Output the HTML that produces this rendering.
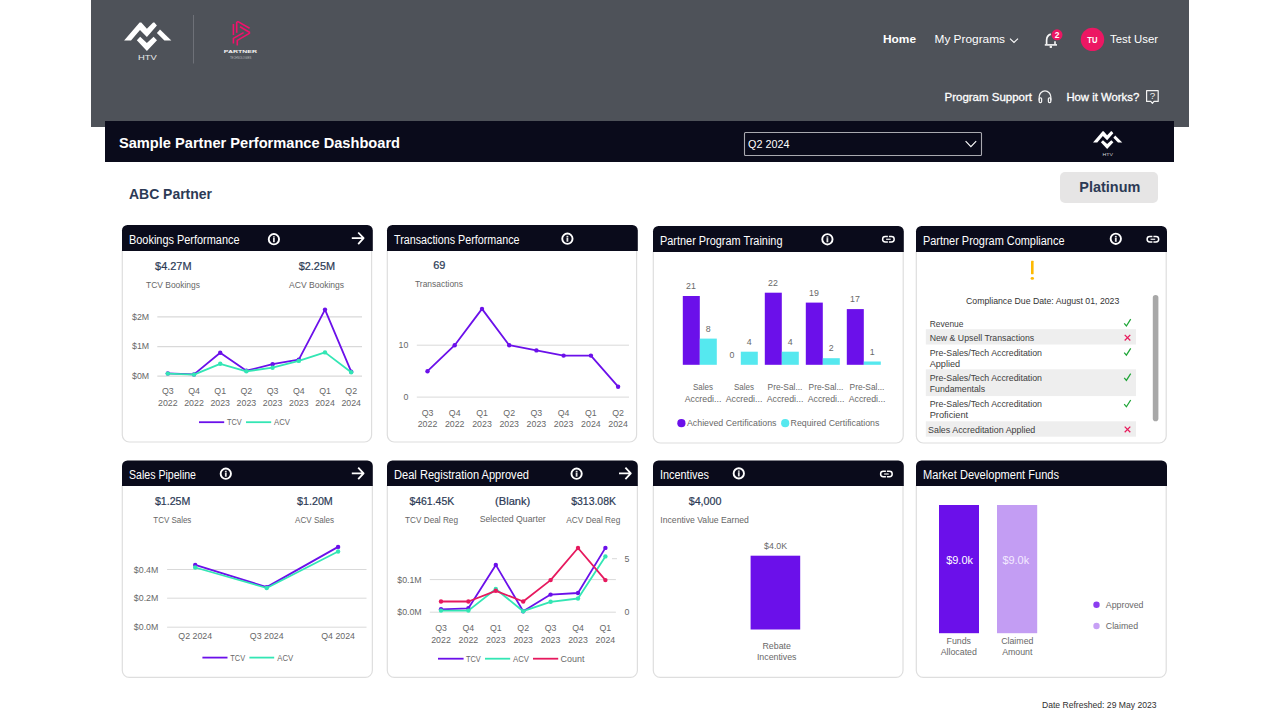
<!DOCTYPE html>
<html lang="en">
<head>
<meta charset="utf-8">
<title>Sample Partner Performance Dashboard</title>
<style>
html,body{margin:0;padding:0;background:#fff;}
body{width:1280px;height:720px;position:relative;overflow:hidden;font-family:"Liberation Sans",sans-serif;}
#topbar{position:absolute;left:91px;top:0;width:1098px;height:127px;background:#4e5259;}
#titlebar{position:absolute;left:105px;top:121px;width:1069px;height:41px;background:#0a0b1b;}
#tier{position:absolute;left:1060px;top:172px;width:98px;height:31px;border-radius:5px;background:#e6e5e5;}
#ink{position:absolute;left:0;top:0;width:1280px;height:720px;font-family:"Liberation Sans",sans-serif;}
</style>
</head>
<body>
<header id="topbar"></header>
<div id="titlebar"></div>
<div id="tier"></div>
<main>
<svg id="ink" width="1280" height="720" viewBox="0 0 1280 720" font-family="Liberation Sans, sans-serif">
<path d="M122.30,250.00 V435.00 A7,7 0 0 0 129.30,442.00 H364.60 A7,7 0 0 0 371.60,435.00 V250.00" fill="#fff" stroke="#dedede" stroke-width="1.2"/>
<path d="M122.00,251.00 V230.50 A5.5,5.5 0 0 1 127.50,225.00 H367.30 A5.5,5.5 0 0 1 372.80,230.50 V251.00 Z" fill="#0a0b1b"/>
<path d="M387.30,250.00 V435.00 A7,7 0 0 0 394.30,442.00 H629.60 A7,7 0 0 0 636.60,435.00 V250.00" fill="#fff" stroke="#dedede" stroke-width="1.2"/>
<path d="M387.00,251.00 V230.50 A5.5,5.5 0 0 1 392.50,225.00 H632.30 A5.5,5.5 0 0 1 637.80,230.50 V251.00 Z" fill="#0a0b1b"/>
<path d="M653.30,251.00 V436.00 A7,7 0 0 0 660.30,443.00 H896.20 A7,7 0 0 0 903.20,436.00 V251.00" fill="#fff" stroke="#dedede" stroke-width="1.2"/>
<path d="M653.00,252.00 V231.50 A5.5,5.5 0 0 1 658.50,226.00 H898.30 A5.5,5.5 0 0 1 903.80,231.50 V252.00 Z" fill="#0a0b1b"/>
<path d="M916.30,251.00 V436.00 A7,7 0 0 0 923.30,443.00 H1159.20 A7,7 0 0 0 1166.20,436.00 V251.00" fill="#fff" stroke="#dedede" stroke-width="1.2"/>
<path d="M916.00,252.00 V231.50 A5.5,5.5 0 0 1 921.50,226.00 H1161.50 A5.5,5.5 0 0 1 1167.00,231.50 V252.00 Z" fill="#0a0b1b"/>
<path d="M122.30,485.10 V670.40 A7,7 0 0 0 129.30,677.40 H365.35 A7,7 0 0 0 372.35,670.40 V485.10" fill="#fff" stroke="#dedede" stroke-width="1.2"/>
<path d="M122.00,486.10 V465.90 A5.5,5.5 0 0 1 127.50,460.40 H367.30 A5.5,5.5 0 0 1 372.80,465.90 V486.10 Z" fill="#0a0b1b"/>
<path d="M387.30,485.10 V670.40 A7,7 0 0 0 394.30,677.40 H630.40 A7,7 0 0 0 637.40,670.40 V485.10" fill="#fff" stroke="#dedede" stroke-width="1.2"/>
<path d="M387.00,486.10 V465.90 A5.5,5.5 0 0 1 392.50,460.40 H632.30 A5.5,5.5 0 0 1 637.80,465.90 V486.10 Z" fill="#0a0b1b"/>
<path d="M653.30,485.10 V670.40 A7,7 0 0 0 660.30,677.40 H896.00 A7,7 0 0 0 903.00,670.40 V485.10" fill="#fff" stroke="#dedede" stroke-width="1.2"/>
<path d="M653.00,486.10 V465.90 A5.5,5.5 0 0 1 658.50,460.40 H898.30 A5.5,5.5 0 0 1 903.80,465.90 V486.10 Z" fill="#0a0b1b"/>
<path d="M916.30,485.10 V670.40 A7,7 0 0 0 923.30,677.40 H1159.20 A7,7 0 0 0 1166.20,670.40 V485.10" fill="#fff" stroke="#dedede" stroke-width="1.2"/>
<path d="M916.00,486.10 V465.90 A5.5,5.5 0 0 1 921.50,460.40 H1161.50 A5.5,5.5 0 0 1 1167.00,465.90 V486.10 Z" fill="#0a0b1b"/>
<polygon points="124.10,40.60 139.60,22.50 141.30,22.50 146.90,28.80 153.10,22.50 154.40,22.50 156.90,25.60 146.90,36.90 140.00,30.00 131.00,40.60" fill="#fff"/>
<polygon points="160.00,29.40 171.30,40.60 164.40,40.60 156.90,33.10" fill="#fff"/>
<polygon points="136.80,40.30 140.20,36.80 146.90,43.10 153.60,36.80 157.00,40.30 146.90,51.00" fill="#fff"/>
<text x="147.3" y="60.2" font-size="8.1" text-anchor="middle" fill="#e9e9ea" textLength="18.8" lengthAdjust="spacingAndGlyphs">HTV</text>
<line x1="193.5" y1="15.0" x2="193.5" y2="63.5" stroke="#6e7178" stroke-width="1"/>
<g fill="none" stroke="#f3106c" stroke-width="1.6" stroke-linecap="butt" stroke-linejoin="miter"><path d="M233.4,24 V35.1"/><path d="M236.7,32.7 V22.4 L238,21.6 L249.6,28.3"/><path d="M240,26.8 L249.4,32.2 V33.4 L237.3,40.4 V45.6"/><path d="M243.6,32.6 L233.4,38.4 V43.6"/></g>
<text x="240.4" y="53.3" font-size="4.2" text-anchor="middle" font-weight="700" fill="#f4f4f4" textLength="33.3" lengthAdjust="spacingAndGlyphs">PARTNER</text>
<text x="240.7" y="58.9" font-size="2.6" text-anchor="middle" fill="#b9bbbf" textLength="21.5" lengthAdjust="spacingAndGlyphs">TECHNOLOGIES</text>
<text x="883.0" y="43.4" font-size="11.2" font-weight="700" fill="#fff" textLength="33.0" lengthAdjust="spacingAndGlyphs">Home</text>
<text x="934.5" y="43.4" font-size="11.2" fill="#fff" textLength="70.5" lengthAdjust="spacingAndGlyphs">My Programs</text>
<path d="M1010,38.6 L1014,42.4 L1018,38.6" fill="none" stroke="#fff" stroke-width="1.1"/>
<path d="M1050.8,34.1 C1047.6,35.1 1046.6,37.6 1046.6,40.2 V44.2" fill="none" stroke="#f6f6f6" stroke-width="1.7"/><path d="M1044.8,44.9 H1057" stroke="#f6f6f6" stroke-width="1.6" fill="none"/><path d="M1055,41.2 V44.4" stroke="#f6f6f6" stroke-width="1.6" fill="none"/><rect x="1049.6" y="45.8" width="2.4" height="2.1" rx="0.6" fill="#f0f0f0"/>
<circle cx="1057.0" cy="34.8" r="5.5" fill="#ec1763"/>
<text x="1057.0" y="37.8" font-size="8.4" text-anchor="middle" font-weight="700" fill="#fff">2</text>
<circle cx="1092.5" cy="39.4" r="11.7" fill="#ec1763"/>
<text x="1092.4" y="42.9" font-size="9.6" text-anchor="middle" font-weight="700" fill="#fff" textLength="10.2" lengthAdjust="spacingAndGlyphs">TU</text>
<text x="1110.0" y="43.1" font-size="11.4" fill="#fff" textLength="48.0" lengthAdjust="spacingAndGlyphs">Test User</text>
<text x="944.5" y="101.0" font-size="11.2" fill="#fff" textLength="87.5" lengthAdjust="spacingAndGlyphs" stroke="#fff" stroke-width="0.3">Program Support</text>
<g fill="none" stroke="#f2f2f2" stroke-width="1.25"><path d="M1039.2,100.4 V96.8 A5.8,5.8 0 0 1 1050.8,96.8 V100.4"/><rect x="1039.2" y="97.8" width="2.4" height="4.8" rx="1"/><rect x="1048.4" y="97.8" width="2.4" height="4.8" rx="1"/></g>
<text x="1066.4" y="101.0" font-size="11.2" fill="#fff" textLength="72.8" lengthAdjust="spacingAndGlyphs" stroke="#fff" stroke-width="0.3">How it Works?</text>
<path d="M1146.6,90.7 H1158.2 V101.4 H1154 L1152.4,103.3 L1150.8,101.4 H1146.6 Z" fill="none" stroke="#f2f2f2" stroke-width="1.2" stroke-linejoin="round"/>
<text x="1152.4" y="99.4" font-size="9.8" text-anchor="middle" fill="#f2f2f2">?</text>
<text x="119.0" y="148.4" font-size="14.4" font-weight="700" fill="#fff" textLength="281.0" lengthAdjust="spacingAndGlyphs">Sample Partner Performance Dashboard</text>
<rect x="744.5" y="132.5" width="237" height="23" fill="none" stroke="#a9a9b0" stroke-width="1.1" rx="1"/>
<text x="748.0" y="148.4" font-size="10.8" fill="#fff" textLength="41.5" lengthAdjust="spacingAndGlyphs">Q2 2024</text>
<path d="M965.6,141.2 L970.9,146.6 L976.2,141.2" fill="none" stroke="#fff" stroke-width="1.1"/>
<polygon points="1093.00,142.52 1102.61,131.30 1103.66,131.30 1107.14,135.21 1110.98,131.30 1111.79,131.30 1113.34,133.22 1107.14,140.23 1102.86,135.95 1097.28,142.52" fill="#fff"/>
<polygon points="1115.26,135.58 1122.26,142.52 1117.99,142.52 1113.34,137.87" fill="#fff"/>
<polygon points="1100.87,142.34 1102.98,140.17 1107.14,144.07 1111.29,140.17 1113.40,142.34 1107.14,148.97" fill="#fff"/>
<text x="1107.8" y="155.8" font-size="4.4" text-anchor="middle" fill="#d8d8dc" textLength="10.5" lengthAdjust="spacingAndGlyphs">HTV</text>
<text x="129.0" y="198.9" font-size="14" font-weight="700" fill="#2c3a55" textLength="83.0" lengthAdjust="spacingAndGlyphs">ABC Partner</text>
<text x="1109.8" y="192.1" font-size="15" text-anchor="middle" font-weight="700" fill="#2c3a55" textLength="61.0" lengthAdjust="spacingAndGlyphs">Platinum</text>
<text x="129.0" y="243.8" font-size="12" fill="#fff" textLength="110.5" lengthAdjust="spacingAndGlyphs">Bookings Performance</text>
<circle cx="273.9" cy="239.2" r="5.15" fill="none" stroke="#fff" stroke-width="1.9"/>
<rect x="273.0" y="236.3" width="1.8" height="1.3" fill="#e4e4e4"/><rect x="273.0" y="238.0" width="1.8" height="4.2" fill="#e4e4e4"/>
<path d="M351.8,238.2 H363.2 M358.2,232.5 L363.6,238.2 L358.2,244.1" fill="none" stroke="#fff" stroke-width="1.8" stroke-linecap="butt" stroke-linejoin="round"/>
<text x="394.0" y="243.8" font-size="12" fill="#fff" textLength="125.5" lengthAdjust="spacingAndGlyphs">Transactions Performance</text>
<circle cx="567.4" cy="238.7" r="5.15" fill="none" stroke="#fff" stroke-width="1.9"/>
<rect x="566.5" y="235.8" width="1.8" height="1.3" fill="#e4e4e4"/><rect x="566.5" y="237.5" width="1.8" height="4.2" fill="#e4e4e4"/>
<text x="660.0" y="244.8" font-size="12" fill="#fff" textLength="122.5" lengthAdjust="spacingAndGlyphs">Partner Program Training</text>
<circle cx="827.4" cy="239.3" r="5.15" fill="none" stroke="#fff" stroke-width="1.9"/>
<rect x="826.5" y="236.4" width="1.8" height="1.3" fill="#e4e4e4"/><rect x="826.5" y="238.1" width="1.8" height="4.2" fill="#e4e4e4"/>
<path d="M887.90,236.60 H885.30 A2.7,2.7 0 0 0 885.30,242.00 H887.90 M888.90,236.60 H891.50 A2.7,2.7 0 0 1 891.50,242.00 H888.90" fill="none" stroke="#fff" stroke-width="1.5"/>
<rect x="886.10" y="238.60" width="4.6" height="1.4" fill="#d2d2d5"/>
<text x="923.0" y="244.8" font-size="12" fill="#fff" textLength="141.5" lengthAdjust="spacingAndGlyphs">Partner Program Compliance</text>
<circle cx="1115.8" cy="238.8" r="5.15" fill="none" stroke="#fff" stroke-width="1.9"/>
<rect x="1114.9" y="235.9" width="1.8" height="1.3" fill="#e4e4e4"/><rect x="1114.9" y="237.6" width="1.8" height="4.2" fill="#e4e4e4"/>
<path d="M1152.40,236.60 H1149.80 A2.7,2.7 0 0 0 1149.80,242.00 H1152.40 M1153.40,236.60 H1156.00 A2.7,2.7 0 0 1 1156.00,242.00 H1153.40" fill="none" stroke="#fff" stroke-width="1.5"/>
<rect x="1150.60" y="238.60" width="4.6" height="1.4" fill="#d2d2d5"/>
<text x="129.0" y="478.8" font-size="12" fill="#fff" textLength="67.0" lengthAdjust="spacingAndGlyphs">Sales Pipeline</text>
<circle cx="225.8" cy="473.7" r="5.15" fill="none" stroke="#fff" stroke-width="1.9"/>
<rect x="224.9" y="470.8" width="1.8" height="1.3" fill="#e4e4e4"/><rect x="224.9" y="472.5" width="1.8" height="4.2" fill="#e4e4e4"/>
<path d="M351.8,473.3 H363.2 M358.2,467.6 L363.6,473.3 L358.2,479.2" fill="none" stroke="#fff" stroke-width="1.8" stroke-linecap="butt" stroke-linejoin="round"/>
<text x="394.0" y="478.8" font-size="12" fill="#fff" textLength="135.0" lengthAdjust="spacingAndGlyphs">Deal Registration Approved</text>
<circle cx="576.6" cy="473.7" r="5.15" fill="none" stroke="#fff" stroke-width="1.9"/>
<rect x="575.7" y="470.8" width="1.8" height="1.3" fill="#e4e4e4"/><rect x="575.7" y="472.5" width="1.8" height="4.2" fill="#e4e4e4"/>
<path d="M619.0,473.3 H630.4 M625.4,467.6 L630.8,473.3 L625.4,479.2" fill="none" stroke="#fff" stroke-width="1.8" stroke-linecap="butt" stroke-linejoin="round"/>
<text x="660.0" y="478.8" font-size="12" fill="#fff" textLength="49.0" lengthAdjust="spacingAndGlyphs">Incentives</text>
<circle cx="738.8" cy="473.4" r="5.15" fill="none" stroke="#fff" stroke-width="1.9"/>
<rect x="737.9" y="470.5" width="1.8" height="1.3" fill="#e4e4e4"/><rect x="737.9" y="472.2" width="1.8" height="4.2" fill="#e4e4e4"/>
<path d="M885.90,471.30 H883.30 A2.7,2.7 0 0 0 883.30,476.70 H885.90 M886.90,471.30 H889.50 A2.7,2.7 0 0 1 889.50,476.70 H886.90" fill="none" stroke="#fff" stroke-width="1.5"/>
<rect x="884.10" y="473.30" width="4.6" height="1.4" fill="#d2d2d5"/>
<text x="923.0" y="478.8" font-size="12" fill="#fff" textLength="136.0" lengthAdjust="spacingAndGlyphs">Market Development Funds</text>
<text x="173.3" y="269.9" font-size="11.8" text-anchor="middle" fill="#2c3a55" textLength="36.4" lengthAdjust="spacingAndGlyphs" stroke="#2c3a55" stroke-width="0.22">$4.27M</text>
<text x="173.0" y="287.7" font-size="8.8" text-anchor="middle" fill="#666" textLength="54.0" lengthAdjust="spacingAndGlyphs">TCV Bookings</text>
<text x="316.9" y="269.9" font-size="11.8" text-anchor="middle" fill="#2c3a55" textLength="36.4" lengthAdjust="spacingAndGlyphs" stroke="#2c3a55" stroke-width="0.22">$2.25M</text>
<text x="316.6" y="287.7" font-size="8.8" text-anchor="middle" fill="#666" textLength="55.0" lengthAdjust="spacingAndGlyphs">ACV Bookings</text>
<line x1="157.3" y1="316.9" x2="362.0" y2="316.9" stroke="#d9d9d9" stroke-width="1.25"/>
<text x="149.2" y="319.6" font-size="8.8" text-anchor="end" fill="#686868">$2M</text>
<line x1="157.3" y1="346.5" x2="362.0" y2="346.5" stroke="#d9d9d9" stroke-width="1.25"/>
<text x="149.2" y="349.2" font-size="8.8" text-anchor="end" fill="#686868">$1M</text>
<line x1="157.3" y1="376.2" x2="362.0" y2="376.2" stroke="#d9d9d9" stroke-width="1.25"/>
<text x="149.2" y="378.9" font-size="8.8" text-anchor="end" fill="#686868">$0M</text>
<text x="167.8" y="394.4" font-size="8.8" text-anchor="middle" fill="#686868">Q3</text>
<text x="167.8" y="406.1" font-size="8.8" text-anchor="middle" fill="#686868">2022</text>
<text x="194.0" y="394.4" font-size="8.8" text-anchor="middle" fill="#686868">Q4</text>
<text x="194.0" y="406.1" font-size="8.8" text-anchor="middle" fill="#686868">2022</text>
<text x="220.2" y="394.4" font-size="8.8" text-anchor="middle" fill="#686868">Q1</text>
<text x="220.2" y="406.1" font-size="8.8" text-anchor="middle" fill="#686868">2023</text>
<text x="246.4" y="394.4" font-size="8.8" text-anchor="middle" fill="#686868">Q2</text>
<text x="246.4" y="406.1" font-size="8.8" text-anchor="middle" fill="#686868">2023</text>
<text x="272.6" y="394.4" font-size="8.8" text-anchor="middle" fill="#686868">Q3</text>
<text x="272.6" y="406.1" font-size="8.8" text-anchor="middle" fill="#686868">2023</text>
<text x="298.8" y="394.4" font-size="8.8" text-anchor="middle" fill="#686868">Q4</text>
<text x="298.8" y="406.1" font-size="8.8" text-anchor="middle" fill="#686868">2023</text>
<text x="325.0" y="394.4" font-size="8.8" text-anchor="middle" fill="#686868">Q1</text>
<text x="325.0" y="406.1" font-size="8.8" text-anchor="middle" fill="#686868">2024</text>
<text x="351.2" y="394.4" font-size="8.8" text-anchor="middle" fill="#686868">Q2</text>
<text x="351.2" y="406.1" font-size="8.8" text-anchor="middle" fill="#686868">2024</text>
<polyline points="167.8,373.4 194.0,374.4 220.2,352.7 246.4,370.7 272.6,364.2 298.8,359.6 325.0,309.6 351.2,371.7" fill="none" stroke="#6b10ea" stroke-width="1.8" stroke-linejoin="round" stroke-linecap="round"/>
<circle cx="167.8" cy="373.4" r="2.2" fill="#6b10ea"/>
<circle cx="194.0" cy="374.4" r="2.2" fill="#6b10ea"/>
<circle cx="220.2" cy="352.7" r="2.2" fill="#6b10ea"/>
<circle cx="246.4" cy="370.7" r="2.2" fill="#6b10ea"/>
<circle cx="272.6" cy="364.2" r="2.2" fill="#6b10ea"/>
<circle cx="298.8" cy="359.6" r="2.2" fill="#6b10ea"/>
<circle cx="325.0" cy="309.6" r="2.2" fill="#6b10ea"/>
<circle cx="351.2" cy="371.7" r="2.2" fill="#6b10ea"/>
<polyline points="167.8,373.6 194.0,374.6 220.2,363.8 246.4,371.3 272.6,367.7 298.8,360.9 325.0,352.4 351.2,372.3" fill="none" stroke="#33e6b4" stroke-width="1.8" stroke-linejoin="round" stroke-linecap="round"/>
<circle cx="167.8" cy="373.6" r="2.2" fill="#33e6b4"/>
<circle cx="194.0" cy="374.6" r="2.2" fill="#33e6b4"/>
<circle cx="220.2" cy="363.8" r="2.2" fill="#33e6b4"/>
<circle cx="246.4" cy="371.3" r="2.2" fill="#33e6b4"/>
<circle cx="272.6" cy="367.7" r="2.2" fill="#33e6b4"/>
<circle cx="298.8" cy="360.9" r="2.2" fill="#33e6b4"/>
<circle cx="325.0" cy="352.4" r="2.2" fill="#33e6b4"/>
<circle cx="351.2" cy="372.3" r="2.2" fill="#33e6b4"/>
<line x1="199.0" y1="422.2" x2="224.2" y2="422.2" stroke="#6b10ea" stroke-width="1.8"/>
<text x="227.0" y="425.1" font-size="8.8" fill="#686868" textLength="14.8" lengthAdjust="spacingAndGlyphs">TCV</text>
<line x1="246.0" y1="422.2" x2="271.2" y2="422.2" stroke="#33e6b4" stroke-width="1.8"/>
<text x="274.0" y="425.1" font-size="8.8" fill="#686868" textLength="16.0" lengthAdjust="spacingAndGlyphs">ACV</text>
<text x="439.3" y="268.9" font-size="11.8" text-anchor="middle" fill="#2c3a55" textLength="12.2" lengthAdjust="spacingAndGlyphs" stroke="#2c3a55" stroke-width="0.22">69</text>
<text x="439.0" y="287.0" font-size="8.8" text-anchor="middle" fill="#666" textLength="48.0" lengthAdjust="spacingAndGlyphs">Transactions</text>
<line x1="416.8" y1="345.2" x2="629.0" y2="345.2" stroke="#d9d9d9" stroke-width="1"/>
<text x="408.3" y="348.2" font-size="8.8" text-anchor="end" fill="#686868">10</text>
<line x1="416.8" y1="397.1" x2="629.0" y2="397.1" stroke="#d9d9d9" stroke-width="1"/>
<text x="408.3" y="400.1" font-size="8.8" text-anchor="end" fill="#686868">0</text>
<text x="427.5" y="415.6" font-size="8.8" text-anchor="middle" fill="#686868">Q3</text>
<text x="427.5" y="427.0" font-size="8.8" text-anchor="middle" fill="#686868">2022</text>
<text x="454.7" y="415.6" font-size="8.8" text-anchor="middle" fill="#686868">Q4</text>
<text x="454.7" y="427.0" font-size="8.8" text-anchor="middle" fill="#686868">2022</text>
<text x="482.0" y="415.6" font-size="8.8" text-anchor="middle" fill="#686868">Q1</text>
<text x="482.0" y="427.0" font-size="8.8" text-anchor="middle" fill="#686868">2023</text>
<text x="509.2" y="415.6" font-size="8.8" text-anchor="middle" fill="#686868">Q2</text>
<text x="509.2" y="427.0" font-size="8.8" text-anchor="middle" fill="#686868">2023</text>
<text x="536.4" y="415.6" font-size="8.8" text-anchor="middle" fill="#686868">Q3</text>
<text x="536.4" y="427.0" font-size="8.8" text-anchor="middle" fill="#686868">2023</text>
<text x="563.6" y="415.6" font-size="8.8" text-anchor="middle" fill="#686868">Q4</text>
<text x="563.6" y="427.0" font-size="8.8" text-anchor="middle" fill="#686868">2023</text>
<text x="590.9" y="415.6" font-size="8.8" text-anchor="middle" fill="#686868">Q1</text>
<text x="590.9" y="427.0" font-size="8.8" text-anchor="middle" fill="#686868">2024</text>
<text x="618.1" y="415.6" font-size="8.8" text-anchor="middle" fill="#686868">Q2</text>
<text x="618.1" y="427.0" font-size="8.8" text-anchor="middle" fill="#686868">2024</text>
<polyline points="427.5,371.2 454.7,345.2 482.0,308.9 509.2,345.2 536.4,350.4 563.6,355.6 590.9,355.6 618.1,386.7" fill="none" stroke="#6b10ea" stroke-width="1.8" stroke-linejoin="round" stroke-linecap="round"/>
<circle cx="427.5" cy="371.2" r="2.2" fill="#6b10ea"/>
<circle cx="454.7" cy="345.2" r="2.2" fill="#6b10ea"/>
<circle cx="482.0" cy="308.9" r="2.2" fill="#6b10ea"/>
<circle cx="509.2" cy="345.2" r="2.2" fill="#6b10ea"/>
<circle cx="536.4" cy="350.4" r="2.2" fill="#6b10ea"/>
<circle cx="563.6" cy="355.6" r="2.2" fill="#6b10ea"/>
<circle cx="590.9" cy="355.6" r="2.2" fill="#6b10ea"/>
<circle cx="618.1" cy="386.7" r="2.2" fill="#6b10ea"/>
<rect x="682.8" y="296.0" width="17.0" height="68.8" fill="#6b10ea"/>
<rect x="699.8" y="338.6" width="17.0" height="26.2" fill="#55e8ef"/>
<text x="691.0" y="289.3" font-size="8.8" text-anchor="middle" fill="#686868">21</text>
<text x="708.3" y="331.8" font-size="8.8" text-anchor="middle" fill="#686868">8</text>
<text x="703.0" y="389.8" font-size="8.8" text-anchor="middle" fill="#686868" textLength="20.0" lengthAdjust="spacingAndGlyphs">Sales</text>
<text x="703.0" y="401.5" font-size="8.8" text-anchor="middle" fill="#686868">Accredi...</text>
<rect x="740.8" y="351.7" width="17.0" height="13.1" fill="#55e8ef"/>
<text x="732.0" y="358.1" font-size="8.8" text-anchor="middle" fill="#686868">0</text>
<text x="749.3" y="344.9" font-size="8.8" text-anchor="middle" fill="#686868">4</text>
<text x="744.0" y="389.8" font-size="8.8" text-anchor="middle" fill="#686868" textLength="20.0" lengthAdjust="spacingAndGlyphs">Sales</text>
<text x="744.0" y="401.5" font-size="8.8" text-anchor="middle" fill="#686868">Accredi...</text>
<rect x="764.8" y="292.7" width="17.0" height="72.1" fill="#6b10ea"/>
<rect x="781.8" y="351.7" width="17.0" height="13.1" fill="#55e8ef"/>
<text x="773.0" y="286.0" font-size="8.8" text-anchor="middle" fill="#686868">22</text>
<text x="790.3" y="344.9" font-size="8.8" text-anchor="middle" fill="#686868">4</text>
<text x="785.0" y="389.8" font-size="8.8" text-anchor="middle" fill="#686868" textLength="34.8" lengthAdjust="spacingAndGlyphs">Pre-Sal...</text>
<text x="785.0" y="401.5" font-size="8.8" text-anchor="middle" fill="#686868">Accredi...</text>
<rect x="805.8" y="302.6" width="17.0" height="62.2" fill="#6b10ea"/>
<rect x="822.8" y="358.2" width="17.0" height="6.6" fill="#55e8ef"/>
<text x="814.0" y="295.8" font-size="8.8" text-anchor="middle" fill="#686868">19</text>
<text x="831.3" y="351.4" font-size="8.8" text-anchor="middle" fill="#686868">2</text>
<text x="826.0" y="389.8" font-size="8.8" text-anchor="middle" fill="#686868" textLength="34.8" lengthAdjust="spacingAndGlyphs">Pre-Sal...</text>
<text x="826.0" y="401.5" font-size="8.8" text-anchor="middle" fill="#686868">Accredi...</text>
<rect x="846.8" y="309.1" width="17.0" height="55.7" fill="#6b10ea"/>
<rect x="863.8" y="361.5" width="17.0" height="3.3" fill="#55e8ef"/>
<text x="855.0" y="302.4" font-size="8.8" text-anchor="middle" fill="#686868">17</text>
<text x="872.3" y="354.7" font-size="8.8" text-anchor="middle" fill="#686868">1</text>
<text x="867.0" y="389.8" font-size="8.8" text-anchor="middle" fill="#686868" textLength="34.8" lengthAdjust="spacingAndGlyphs">Pre-Sal...</text>
<text x="867.0" y="401.5" font-size="8.8" text-anchor="middle" fill="#686868">Accredi...</text>
<circle cx="681.4" cy="423.2" r="4.1" fill="#6b10ea"/>
<text x="687.0" y="426.4" font-size="8.8" fill="#686868" textLength="89.5" lengthAdjust="spacingAndGlyphs">Achieved Certifications</text>
<circle cx="785.2" cy="423.2" r="4.1" fill="#55e8ef"/>
<text x="790.6" y="426.4" font-size="8.8" fill="#686868" textLength="88.8" lengthAdjust="spacingAndGlyphs">Required Certifications</text>
<rect x="1031" y="260.8" width="2.6" height="13.4" rx="0.4" fill="#fdb902"/><ellipse cx="1032.3" cy="278.4" rx="1.7" ry="1.45" fill="#fdb902"/>
<text x="966.0" y="303.7" font-size="8.8" fill="#333" textLength="153.3" lengthAdjust="spacingAndGlyphs">Compliance Due Date: August 01, 2023</text>
<rect x="1152.8" y="295" width="5.6" height="126.2" rx="2.8" fill="#a8a8a8"/>
<rect x="925.8" y="329.2" width="210.2" height="15.3" fill="#eeeeee"/>
<rect x="925.8" y="369.3" width="210.2" height="26.8" fill="#eeeeee"/>
<rect x="925.8" y="421.3" width="210.2" height="15.4" fill="#eeeeee"/>
<text x="929.7" y="326.6" font-size="8.6" fill="#404040" textLength="33.8" lengthAdjust="spacingAndGlyphs">Revenue</text>
<path d="M1124.2,323.4 L1126.4,326.0 L1130.7,319.2" fill="none" stroke="#1fa537" stroke-width="1.25"/>
<text x="929.7" y="341.0" font-size="8.6" fill="#404040" textLength="104.5" lengthAdjust="spacingAndGlyphs">New &amp; Upsell Transactions</text>
<path d="M1124.7,334.9 L1130.3,340.5 M1130.3,334.9 L1124.7,340.5" fill="none" stroke="#e81a5b" stroke-width="1.25"/>
<text x="929.7" y="355.8" font-size="8.6" fill="#404040" textLength="112.3" lengthAdjust="spacingAndGlyphs">Pre-Sales/Tech Accreditation</text>
<path d="M1124.2,352.6 L1126.4,355.2 L1130.7,348.4" fill="none" stroke="#1fa537" stroke-width="1.25"/>
<text x="929.7" y="366.9" font-size="8.6" fill="#404040" textLength="30.5" lengthAdjust="spacingAndGlyphs">Applied</text>
<text x="929.7" y="380.7" font-size="8.6" fill="#404040" textLength="112.3" lengthAdjust="spacingAndGlyphs">Pre-Sales/Tech Accreditation</text>
<path d="M1124.2,377.8 L1126.4,380.4 L1130.7,373.6" fill="none" stroke="#1fa537" stroke-width="1.25"/>
<text x="929.7" y="392.4" font-size="8.6" fill="#404040" textLength="55.5" lengthAdjust="spacingAndGlyphs">Fundamentals</text>
<text x="929.7" y="407.0" font-size="8.6" fill="#404040" textLength="112.3" lengthAdjust="spacingAndGlyphs">Pre-Sales/Tech Accreditation</text>
<path d="M1124.2,404.2 L1126.4,406.8 L1130.7,400.0" fill="none" stroke="#1fa537" stroke-width="1.25"/>
<text x="929.7" y="418.4" font-size="8.6" fill="#404040" textLength="38.5" lengthAdjust="spacingAndGlyphs">Proficient</text>
<text x="928.0" y="432.8" font-size="8.6" fill="#404040" textLength="107.3" lengthAdjust="spacingAndGlyphs">Sales Accreditation Applied</text>
<path d="M1124.7,426.6 L1130.3,432.2 M1130.3,426.6 L1124.7,432.2" fill="none" stroke="#e81a5b" stroke-width="1.25"/>
<text x="172.6" y="505.3" font-size="11.8" text-anchor="middle" fill="#2c3a55" textLength="35.4" lengthAdjust="spacingAndGlyphs" stroke="#2c3a55" stroke-width="0.22">$1.25M</text>
<text x="172.3" y="523.1" font-size="8.8" text-anchor="middle" fill="#666" textLength="38.0" lengthAdjust="spacingAndGlyphs">TCV Sales</text>
<text x="314.9" y="505.3" font-size="11.8" text-anchor="middle" fill="#2c3a55" textLength="35.8" lengthAdjust="spacingAndGlyphs" stroke="#2c3a55" stroke-width="0.22">$1.20M</text>
<text x="314.6" y="523.1" font-size="8.8" text-anchor="middle" fill="#666" textLength="39.0" lengthAdjust="spacingAndGlyphs">ACV Sales</text>
<line x1="167.1" y1="569.5" x2="366.5" y2="569.5" stroke="#d9d9d9" stroke-width="1"/>
<text x="158.3" y="572.6" font-size="8.8" text-anchor="end" fill="#686868">$0.4M</text>
<line x1="167.1" y1="598.2" x2="366.5" y2="598.2" stroke="#d9d9d9" stroke-width="1"/>
<text x="158.3" y="601.3" font-size="8.8" text-anchor="end" fill="#686868">$0.2M</text>
<line x1="167.1" y1="627.2" x2="366.5" y2="627.2" stroke="#d9d9d9" stroke-width="1"/>
<text x="158.3" y="630.3" font-size="8.8" text-anchor="end" fill="#686868">$0.0M</text>
<text x="195.2" y="639.0" font-size="8.8" text-anchor="middle" fill="#686868">Q2 2024</text>
<text x="266.7" y="639.0" font-size="8.8" text-anchor="middle" fill="#686868">Q3 2024</text>
<text x="338.1" y="639.0" font-size="8.8" text-anchor="middle" fill="#686868">Q4 2024</text>
<polyline points="195.2,564.9 266.7,587.1 338.1,546.9" fill="none" stroke="#6b10ea" stroke-width="1.8" stroke-linejoin="round" stroke-linecap="round"/>
<circle cx="195.2" cy="564.9" r="2.2" fill="#6b10ea"/>
<circle cx="266.7" cy="587.1" r="2.2" fill="#6b10ea"/>
<circle cx="338.1" cy="546.9" r="2.2" fill="#6b10ea"/>
<polyline points="195.2,567.5 266.7,588.0 338.1,551.5" fill="none" stroke="#33e6b4" stroke-width="1.8" stroke-linejoin="round" stroke-linecap="round"/>
<circle cx="195.2" cy="567.5" r="2.2" fill="#33e6b4"/>
<circle cx="266.7" cy="588.0" r="2.2" fill="#33e6b4"/>
<circle cx="338.1" cy="551.5" r="2.2" fill="#33e6b4"/>
<line x1="202.4" y1="657.6" x2="227.5" y2="657.6" stroke="#6b10ea" stroke-width="1.8"/>
<text x="230.3" y="660.5" font-size="8.8" fill="#686868" textLength="14.8" lengthAdjust="spacingAndGlyphs">TCV</text>
<line x1="249.4" y1="657.6" x2="274.2" y2="657.6" stroke="#33e6b4" stroke-width="1.8"/>
<text x="277.2" y="660.5" font-size="8.8" fill="#686868" textLength="16.0" lengthAdjust="spacingAndGlyphs">ACV</text>
<text x="431.8" y="505.3" font-size="11.8" text-anchor="middle" fill="#2c3a55" textLength="44.8" lengthAdjust="spacingAndGlyphs" stroke="#2c3a55" stroke-width="0.22">$461.45K</text>
<text x="431.5" y="523.0" font-size="8.8" text-anchor="middle" fill="#666" textLength="53.0" lengthAdjust="spacingAndGlyphs">TCV Deal Reg</text>
<text x="512.7" y="504.5" font-size="11.8" text-anchor="middle" fill="#2c3a55" textLength="35.2" lengthAdjust="spacingAndGlyphs" stroke="#2c3a55" stroke-width="0.22">(Blank)</text>
<text x="512.7" y="522.1" font-size="8.8" text-anchor="middle" fill="#666" textLength="66.0" lengthAdjust="spacingAndGlyphs">Selected Quarter</text>
<text x="593.6" y="505.3" font-size="11.8" text-anchor="middle" fill="#2c3a55" textLength="44.8" lengthAdjust="spacingAndGlyphs" stroke="#2c3a55" stroke-width="0.22">$313.08K</text>
<text x="593.3" y="523.0" font-size="8.8" text-anchor="middle" fill="#666" textLength="54.0" lengthAdjust="spacingAndGlyphs">ACV Deal Reg</text>
<line x1="429.8" y1="579.6" x2="615.9" y2="579.6" stroke="#d9d9d9" stroke-width="1"/>
<text x="421.7" y="582.7" font-size="8.8" text-anchor="end" fill="#686868">$0.1M</text>
<line x1="429.8" y1="612.2" x2="615.9" y2="612.2" stroke="#d9d9d9" stroke-width="1"/>
<text x="421.7" y="615.3" font-size="8.8" text-anchor="end" fill="#686868">$0.0M</text>
<line x1="612.0" y1="558.7" x2="617.0" y2="558.7" stroke="#d9d9d9" stroke-width="1"/>
<text x="627.0" y="561.7" font-size="8.8" text-anchor="middle" fill="#686868">5</text>
<text x="627.0" y="615.2" font-size="8.8" text-anchor="middle" fill="#686868">0</text>
<text x="441.0" y="630.8" font-size="8.8" text-anchor="middle" fill="#686868">Q3</text>
<text x="441.0" y="642.6" font-size="8.8" text-anchor="middle" fill="#686868">2022</text>
<text x="468.4" y="630.8" font-size="8.8" text-anchor="middle" fill="#686868">Q4</text>
<text x="468.4" y="642.6" font-size="8.8" text-anchor="middle" fill="#686868">2022</text>
<text x="495.8" y="630.8" font-size="8.8" text-anchor="middle" fill="#686868">Q1</text>
<text x="495.8" y="642.6" font-size="8.8" text-anchor="middle" fill="#686868">2023</text>
<text x="523.2" y="630.8" font-size="8.8" text-anchor="middle" fill="#686868">Q2</text>
<text x="523.2" y="642.6" font-size="8.8" text-anchor="middle" fill="#686868">2023</text>
<text x="550.6" y="630.8" font-size="8.8" text-anchor="middle" fill="#686868">Q3</text>
<text x="550.6" y="642.6" font-size="8.8" text-anchor="middle" fill="#686868">2023</text>
<text x="578.0" y="630.8" font-size="8.8" text-anchor="middle" fill="#686868">Q4</text>
<text x="578.0" y="642.6" font-size="8.8" text-anchor="middle" fill="#686868">2023</text>
<text x="605.4" y="630.8" font-size="8.8" text-anchor="middle" fill="#686868">Q1</text>
<text x="605.4" y="642.6" font-size="8.8" text-anchor="middle" fill="#686868">2024</text>
<polyline points="441.0,609.3 468.4,608.3 495.8,564.9 523.2,611.2 550.6,594.6 578.0,593.0 605.4,547.9" fill="none" stroke="#6b10ea" stroke-width="1.8" stroke-linejoin="round" stroke-linecap="round"/>
<circle cx="441.0" cy="609.3" r="2.2" fill="#6b10ea"/>
<circle cx="468.4" cy="608.3" r="2.2" fill="#6b10ea"/>
<circle cx="495.8" cy="564.9" r="2.2" fill="#6b10ea"/>
<circle cx="523.2" cy="611.2" r="2.2" fill="#6b10ea"/>
<circle cx="550.6" cy="594.6" r="2.2" fill="#6b10ea"/>
<circle cx="578.0" cy="593.0" r="2.2" fill="#6b10ea"/>
<circle cx="605.4" cy="547.9" r="2.2" fill="#6b10ea"/>
<polyline points="441.0,610.6 468.4,610.6 495.8,589.0 523.2,611.2 550.6,601.8 578.0,598.5 605.4,556.4" fill="none" stroke="#33e6b4" stroke-width="1.8" stroke-linejoin="round" stroke-linecap="round"/>
<circle cx="441.0" cy="610.6" r="2.2" fill="#33e6b4"/>
<circle cx="468.4" cy="610.6" r="2.2" fill="#33e6b4"/>
<circle cx="495.8" cy="589.0" r="2.2" fill="#33e6b4"/>
<circle cx="523.2" cy="611.2" r="2.2" fill="#33e6b4"/>
<circle cx="550.6" cy="601.8" r="2.2" fill="#33e6b4"/>
<circle cx="578.0" cy="598.5" r="2.2" fill="#33e6b4"/>
<circle cx="605.4" cy="556.4" r="2.2" fill="#33e6b4"/>
<polyline points="441.0,601.5 468.4,601.5 495.8,590.8 523.2,601.5 550.6,580.1 578.0,548.0 605.4,580.1" fill="none" stroke="#e6195e" stroke-width="1.8" stroke-linejoin="round" stroke-linecap="round"/>
<circle cx="441.0" cy="601.5" r="2.2" fill="#e6195e"/>
<circle cx="468.4" cy="601.5" r="2.2" fill="#e6195e"/>
<circle cx="495.8" cy="590.8" r="2.2" fill="#e6195e"/>
<circle cx="523.2" cy="601.5" r="2.2" fill="#e6195e"/>
<circle cx="550.6" cy="580.1" r="2.2" fill="#e6195e"/>
<circle cx="578.0" cy="548.0" r="2.2" fill="#e6195e"/>
<circle cx="605.4" cy="580.1" r="2.2" fill="#e6195e"/>
<line x1="438.0" y1="658.7" x2="463.6" y2="658.7" stroke="#6b10ea" stroke-width="1.8"/>
<text x="466.0" y="661.8" font-size="8.8" fill="#686868" textLength="14.8" lengthAdjust="spacingAndGlyphs">TCV</text>
<line x1="485.0" y1="658.7" x2="510.2" y2="658.7" stroke="#33e6b4" stroke-width="1.8"/>
<text x="513.0" y="661.8" font-size="8.8" fill="#686868" textLength="16.0" lengthAdjust="spacingAndGlyphs">ACV</text>
<line x1="533.0" y1="658.7" x2="558.2" y2="658.7" stroke="#e6195e" stroke-width="1.8"/>
<text x="560.6" y="661.8" font-size="8.8" fill="#686868" textLength="23.8" lengthAdjust="spacingAndGlyphs">Count</text>
<text x="705.1" y="505.3" font-size="11.8" text-anchor="middle" fill="#2c3a55" textLength="32.8" lengthAdjust="spacingAndGlyphs" stroke="#2c3a55" stroke-width="0.22">$4,000</text>
<text x="704.6" y="523.1" font-size="8.8" text-anchor="middle" fill="#666" textLength="88.5" lengthAdjust="spacingAndGlyphs">Incentive Value Earned</text>
<text x="775.6" y="549.1" font-size="8.8" text-anchor="middle" fill="#686868">$4.0K</text>
<rect x="750.6" y="555.7" width="49.6" height="73.8" fill="#6b10ea"/>
<text x="776.7" y="648.6" font-size="8.8" text-anchor="middle" fill="#686868">Rebate</text>
<text x="776.7" y="660.1" font-size="8.8" text-anchor="middle" fill="#686868">Incentives</text>
<rect x="939.0" y="505.0" width="40.0" height="128.2" fill="#6b10ea"/>
<rect x="997.0" y="505.0" width="40.2" height="128.2" fill="#c39df3"/>
<text x="959.6" y="564.0" font-size="10.6" text-anchor="middle" fill="#fff" textLength="26.8" lengthAdjust="spacingAndGlyphs">$9.0k</text>
<text x="1015.8" y="564.0" font-size="10.6" text-anchor="middle" fill="#f3eaff" textLength="26.8" lengthAdjust="spacingAndGlyphs">$9.0k</text>
<text x="958.8" y="644.1" font-size="8.8" text-anchor="middle" fill="#686868">Funds</text>
<text x="958.8" y="654.8" font-size="8.8" text-anchor="middle" fill="#686868">Allocated</text>
<text x="1017.3" y="644.1" font-size="8.8" text-anchor="middle" fill="#686868">Claimed</text>
<text x="1017.3" y="654.8" font-size="8.8" text-anchor="middle" fill="#686868">Amount</text>
<circle cx="1096.5" cy="604.7" r="3.2" fill="#8b3df0"/>
<text x="1105.8" y="608.1" font-size="8.8" fill="#686868">Approved</text>
<circle cx="1096.5" cy="626.0" r="3.2" fill="#c7a0f5"/>
<text x="1105.8" y="629.2" font-size="8.8" fill="#686868">Claimed</text>
<text x="1042.0" y="707.8" font-size="8.8" fill="#303030" textLength="114.5" lengthAdjust="spacingAndGlyphs">Date Refreshed: 29 May 2023</text>
</svg>
</main>
</body>
</html>
